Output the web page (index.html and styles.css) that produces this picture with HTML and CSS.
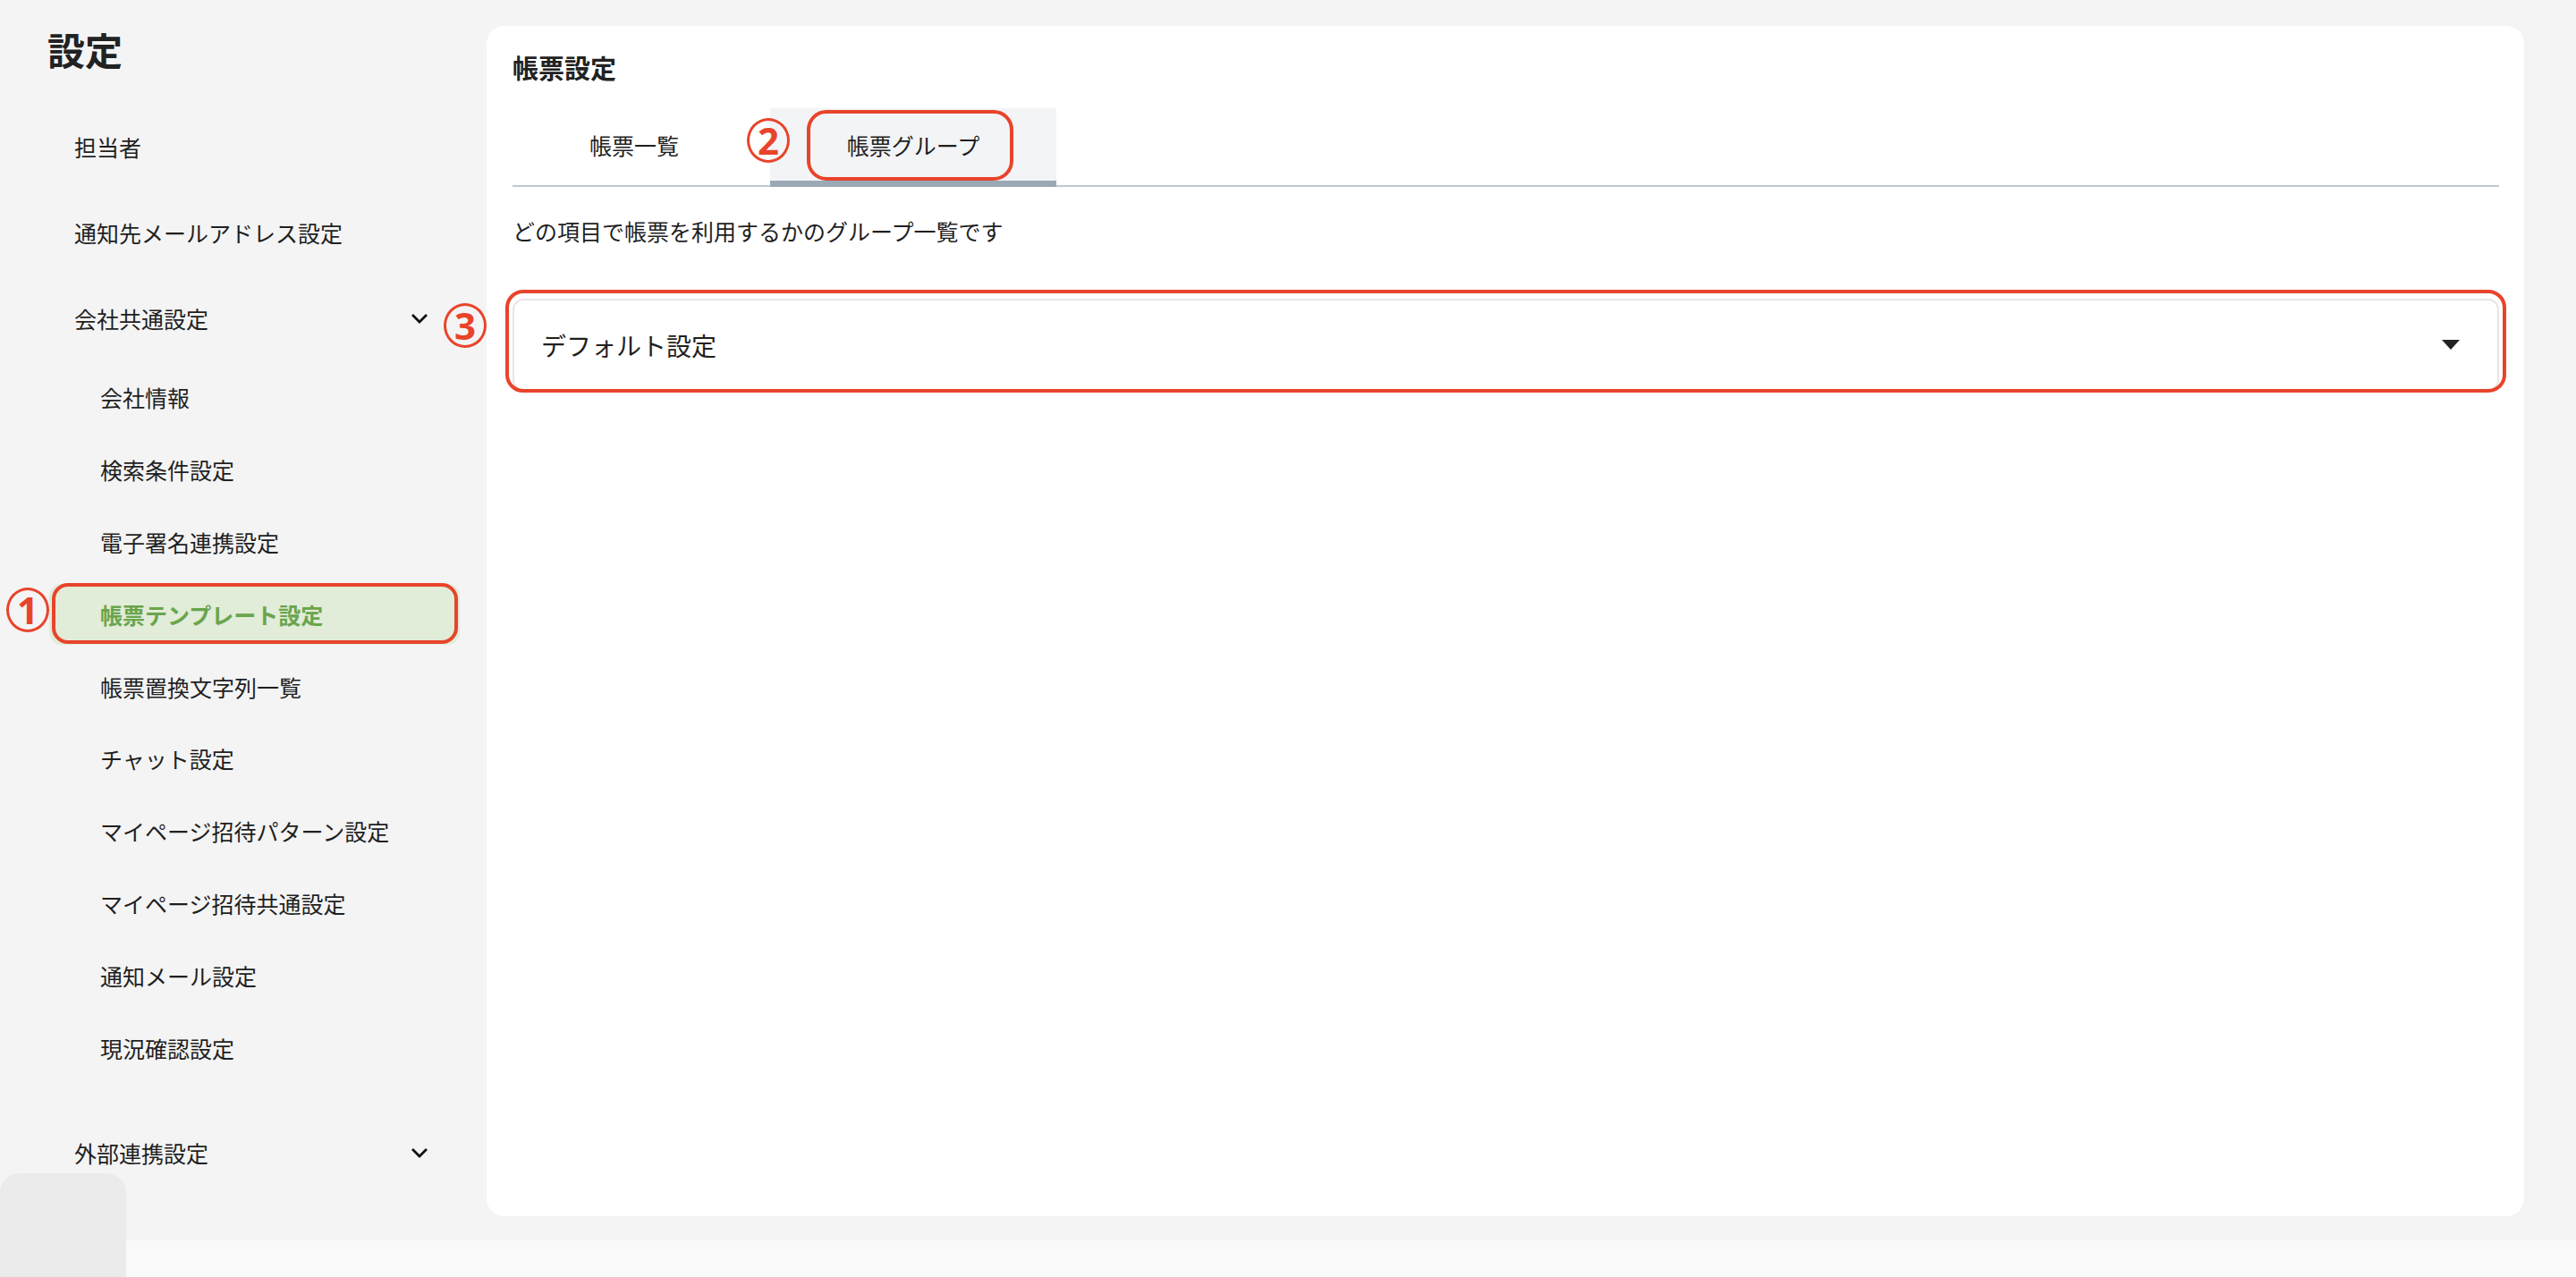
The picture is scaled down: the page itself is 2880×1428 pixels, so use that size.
FILE: index.html
```html
<html>
    <head>
        <meta charset="utf-8">
        <link rel="stylesheet" href="styles.css">
    </head>
    <body>
        <div class="page">
            <aside class="sidebar">
                <h1 class="sidebar-title">設定</h1>
                <nav class="nav">
                    <div class="nav-item">担当者</div>
                    <div class="nav-item">通知先メールアドレス設定</div>
                    <div class="nav-item">
                        <span>会社共通設定</span>
                        <svg class="chevron" width="20" height="14" viewBox="0 0 20 14"><polyline points="2,3 10,11 18,3" fill="none" stroke="#111" stroke-width="2.8"/></svg>
                    </div>
                    <div class="sub-list">
                        <div class="sub-item">会社情報</div>
                        <div class="sub-item">検索条件設定</div>
                        <div class="sub-item">電子署名連携設定</div>
                        <div class="sub-item active">
                            帳票テンプレート設定
                            <span class="mark-ring"></span>
                            <span class="mark-num num-1">1</span>
                        </div>
                        <div class="sub-item">帳票置換文字列一覧</div>
                        <div class="sub-item">チャット設定</div>
                        <div class="sub-item">マイページ招待パターン設定</div>
                        <div class="sub-item">マイページ招待共通設定</div>
                        <div class="sub-item">通知メール設定</div>
                        <div class="sub-item">現況確認設定</div>
                    </div>
                    <div class="nav-item">
                        <span>外部連携設定</span>
                        <svg class="chevron" width="20" height="14" viewBox="0 0 20 14"><polyline points="2,3 10,11 18,3" fill="none" stroke="#111" stroke-width="2.8"/></svg>
                    </div>
                </nav>
            </aside>
            <main class="card">
                <h2 class="card-title">帳票設定</h2>
                <div class="tabs">
                    <div class="tab tab-list">帳票一覧</div>
                    <div class="tab tab-group active">
                        帳票グループ
                        <span class="mark-ring ring-tab"></span>
                    </div>
                    <span class="mark-num num-2">2</span>
                </div>
                <p class="desc">どの項目で帳票を利用するかのグループ一覧です</p>
                <div class="select">
                    <span>デフォルト設定</span>
                    <svg width="20" height="11" viewBox="0 0 20 11"><polygon points="0,0 20,0 10,11" fill="#222"/></svg>
                    <span class="mark-ring ring-select"></span>
                    <span class="mark-num num-3">3</span>
                </div>
            </main>
        </div>
        <footer class="footer"></footer>
        <div class="corner-widget"></div>
    </body>
</html>
```

FILE: styles.css
```css
body {
    margin: 0;
    background-color: #f4f4f4;
    font-family: 'Noto Sans CJK JP', 'Noto Sans', sans-serif;
    color: #1f1f1f;
    position: relative;
    overflow: hidden;
}
.page {
    display: flex;
    height: 1387px;
}
.sidebar {
    width: 544px;
    flex-shrink: 0;
    padding-top: 25px;
    box-sizing: border-box;
}
.sidebar-title {
    margin: 0;
    padding-left: 53px;
    font-size: 42px;
    line-height: 60px;
    font-weight: 700;
    color: #222;
}
.nav {
    margin-top: 31px;
}
.nav-item {
    height: 96px;
    display: flex;
    align-items: center;
    justify-content: space-between;
    padding: 0 65px 0 83px;
    font-size: 25px;
}
.sub-list {
    display: flex;
    flex-direction: column;
    padding: 6.4px 0;
    gap: 12.8px;
    margin-bottom: 29.5px;
}
.sub-item {
    position: relative;
    height: 68px;
    flex-shrink: 0;
    margin: 0 30px 0 55px;
    padding-left: 57px;
    display: flex;
    align-items: center;
    font-size: 25px;
    border-radius: 14px;
}
.sub-item.active {
    background-color: #e1ecd9;
    color: #69a54c;
    font-weight: 700;
}
.mark-ring {
    position: absolute;
    top: -1px;
    left: 3px;
    right: 2px;
    bottom: 1px;
    border: 4px solid #e8442b;
    border-radius: 18px;
}
.mark-num {
    position: absolute;
    width: 48px;
    height: 50px;
    box-sizing: border-box;
    border: 3px solid #e8442b;
    border-radius: 50%;
    display: flex;
    align-items: center;
    justify-content: center;
    color: #e8442b;
    font-family: 'Noto Sans', sans-serif;
    font-size: 42px;
    font-weight: 700;
    line-height: 1;
}
.num-1 {
    left: -48px;
    top: 4px;
}
.card {
    flex: 1;
    margin: 29px 58px 27px 0;
    padding: 26px 28px 0 29px;
    background-color: #fff;
    border-radius: 20px;
}
.card-title {
    margin: 0;
    font-size: 29px;
    line-height: 40px;
    font-weight: 700;
    color: #222;
}
.tabs {
    position: relative;
    display: flex;
    margin-top: 26px;
    height: 88px;
    box-sizing: border-box;
    border-bottom: 2px solid #c0c9d1;
}
.tab {
    position: relative;
    height: 88px;
    margin-bottom: -2px;
    box-sizing: border-box;
    border-bottom: 7px solid transparent;
    display: flex;
    align-items: center;
    justify-content: center;
    font-size: 25px;
}
.tab-list {
    width: 288px;
    padding-right: 16px;
}
.tab-group {
    width: 320px;
}
.tab.active {
    background-color: #f3f4f6;
    border-bottom-color: #9ba9b5;
}
.ring-tab {
    top: 2px;
    left: 41px;
    width: 231px;
    height: 79px;
    right: auto;
    bottom: auto;
    box-sizing: border-box;
    border-radius: 22px;
}
.num-2 {
    left: 262px;
    top: 11px;
}
.desc {
    margin: 31px 0 0;
    font-size: 25px;
    line-height: 36px;
}
.select {
    position: relative;
    margin-top: 58px;
    height: 103px;
    box-sizing: border-box;
    border: 2px solid #e6e6e6;
    border-radius: 12px;
    display: flex;
    align-items: center;
    justify-content: space-between;
    padding: 0 42px 0 30px;
    font-size: 28px;
}
.ring-select {
    top: -12px;
    left: -10px;
    right: -10px;
    bottom: -4px;
    border-radius: 20px;
}
.num-3 {
    left: -79px;
    top: 3px;
}
.footer {
    height: 41px;
    background-color: #fafafa;
}
.corner-widget {
    position: absolute;
    left: 0;
    top: 1312px;
    width: 141px;
    height: 140px;
    border-radius: 22px;
    background-color: #ebebeb;
}
```
